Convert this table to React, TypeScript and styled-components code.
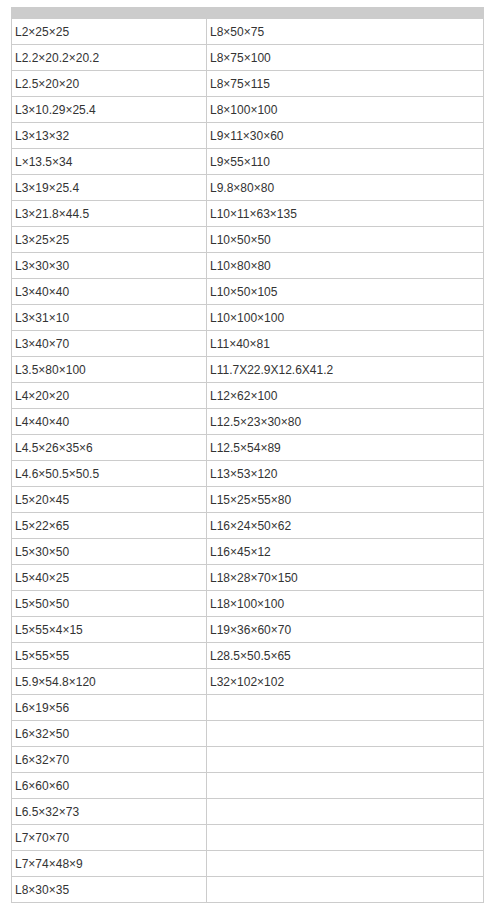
import styled, { createGlobalStyle } from 'styled-components';

const GlobalStyle = createGlobalStyle`
  body {
    margin: 0;
    background: #fff;
    font-family: "Liberation Sans", Arial, sans-serif;
  }
`;

const Page = styled.div`
  padding: 7px 0 0 11px;
`;

const SizeTable = styled.div`
  width: 473px;
  border: 1px solid #cccccc;
  border-top: none;
  box-sizing: border-box;
`;

const HeadBar = styled.div`
  height: 12px;
  background: #cccccc;
`;

const Row = styled.div`
  display: grid;
  grid-template-columns: 195px 1fr;
  height: 26px;
  border-top: 1px solid #cccccc;
  box-sizing: border-box;
  &:nth-child(2) {
    border-top: none;
    height: 25px;
  }
`;

const Cell = styled.div<{ $first?: boolean }>`
  display: flex;
  align-items: center;
  padding-left: 3px;
  font-size: 12px;
  color: #333333;
  white-space: nowrap;
  border-right: ${(p) => (p.$first ? '1px solid #cccccc' : 'none')};
`;

const leftSizes = [
  'L2×25×25', 'L2.2×20.2×20.2', 'L2.5×20×20', 'L3×10.29×25.4', 'L3×13×32',
  'L×13.5×34', 'L3×19×25.4', 'L3×21.8×44.5', 'L3×25×25', 'L3×30×30',
  'L3×40×40', 'L3×31×10', 'L3×40×70', 'L3.5×80×100', 'L4×20×20',
  'L4×40×40', 'L4.5×26×35×6', 'L4.6×50.5×50.5', 'L5×20×45', 'L5×22×65',
  'L5×30×50', 'L5×40×25', 'L5×50×50', 'L5×55×4×15', 'L5×55×55',
  'L5.9×54.8×120', 'L6×19×56', 'L6×32×50', 'L6×32×70', 'L6×60×60',
  'L6.5×32×73', 'L7×70×70', 'L7×74×48×9', 'L8×30×35',
];

const rightSizes = [
  'L8×50×75', 'L8×75×100', 'L8×75×115', 'L8×100×100', 'L9×11×30×60',
  'L9×55×110', 'L9.8×80×80', 'L10×11×63×135', 'L10×50×50', 'L10×80×80',
  'L10×50×105', 'L10×100×100', 'L11×40×81', 'L11.7X22.9X12.6X41.2', 'L12×62×100',
  'L12.5×23×30×80', 'L12.5×54×89', 'L13×53×120', 'L15×25×55×80', 'L16×24×50×62',
  'L16×45×12', 'L18×28×70×150', 'L18×100×100', 'L19×36×60×70', 'L28.5×50.5×65',
  'L32×102×102',
];

export default function App() {
  return (
    <>
      <GlobalStyle />
      <Page>
        <SizeTable>
          <HeadBar />
          {leftSizes.map((left, i) => (
            <Row key={left}>
              <Cell $first>{left}</Cell>
              <Cell>{rightSizes[i] ?? ''}</Cell>
            </Row>
          ))}
        </SizeTable>
      </Page>
    </>
  );
}
